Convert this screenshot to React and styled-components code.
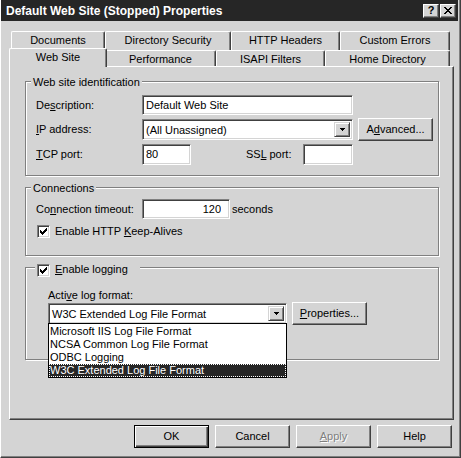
import React from 'react';
import styled, { createGlobalStyle, css } from 'styled-components';

const FACE = '#d4d4d4';
const SHADOW = '#808080';
const DARK = '#404040';
const HILITE = '#ffffff';
const CAPTION = '#262626';

const Global = createGlobalStyle`
  html, body { margin: 0; padding: 0; background: ${FACE}; }
  body {
    font-family: "Liberation Sans", Arial, sans-serif;
    font-size: 11px;
    color: #000;
  }
  * { box-sizing: border-box; }
`;

const Window = styled.div`
  width: 461px;
  height: 458px;
  background: ${FACE};
  border-left: 1px solid ${HILITE};
  border-right: 1px solid ${DARK};
  border-bottom: 1px solid ${DARK};
  box-shadow: inset -1px -1px 0 ${SHADOW};
  display: flex;
  flex-direction: column;
`;

const TitleBar = styled.div`
  height: 21px;
  margin-right: 2px;
  background: ${CAPTION};
  display: flex;
  align-items: center;
  padding: 0 2px 0 5px;
`;

const TitleText = styled.span`
  flex: 1;
  color: #fff;
  font-weight: bold;
  font-size: 12px;
  line-height: 14px;
  white-space: nowrap;
`;

const TitleButtons = styled.div`
  display: flex;
  gap: 1px;
`;

const TitleButton = styled.div`
  width: 16px;
  height: 14px;
  background: ${FACE};
  border: 1px solid;
  border-color: ${HILITE} ${DARK} ${DARK} ${HILITE};
  box-shadow: inset -1px -1px 0 ${SHADOW};
  display: flex;
  align-items: center;
  justify-content: center;
  font-weight: bold;
  font-size: 11px;
  line-height: 11px;
  color: #000;
`;

const Body = styled.div`
  display: flex;
  flex-direction: column;
  padding: 10px 0 0 8px;
`;

const TabRow = styled.div`
  display: flex;
  align-items: flex-start;
  height: ${p => p.$h}px;
  padding-left: 2px;
`;

const Tab = styled.div`
  flex: none;
  width: ${p => p.$w}px;
  height: ${p => p.$h}px;
  margin-top: ${p => p.$top || 0}px;
  background: ${FACE};
  border-top: 1px solid ${HILITE};
  border-left: 1px solid ${HILITE};
  border-right: 1px solid ${DARK};
  box-shadow: inset -1px 0 0 ${SHADOW};
  border-radius: 2px 2px 0 0;
  padding-top: 2px;
  text-align: center;
  line-height: 13px;
  white-space: nowrap;
  ${p => p.$active && css`
    position: relative;
    z-index: 1;
    margin: 0 -2px -1px;
  `}
`;

const TabPanel = styled.div`
  width: 445px;
  height: 354px;
  border: 1px solid;
  border-color: ${HILITE} ${DARK} ${DARK} ${HILITE};
  box-shadow: inset -1px -1px 0 ${SHADOW};
  padding: 14px 14px 0 15px;
  display: flex;
  flex-direction: column;
  gap: 11px;
`;

const Group = styled.div`
  position: relative;
  height: ${p => p.$h}px;
  border: 1px solid ${SHADOW};
  box-shadow: 1px 1px 0 ${HILITE}, inset 1px 1px 0 ${HILITE};
  padding: ${p => p.$pad};
  display: flex;
  flex-direction: column;
`;

const Caption = styled.div`
  position: absolute;
  top: ${p => p.$top}px;
  left: ${p => p.$left}px;
  padding: 0 ${p => p.$right || 2}px 0 2px;
  background: ${FACE};
  line-height: 13px;
  display: flex;
  align-items: flex-start;
  gap: 5px;
  white-space: nowrap;
`;

const Row = styled.div`
  display: flex;
  align-items: center;
  height: ${p => p.$h}px;
  flex: none;
`;

const Label = styled.span`
  flex: none;
  width: ${p => (p.$w ? `${p.$w}px` : 'auto')};
  margin-left: ${p => p.$ml || 0}px;
  line-height: 13px;
  white-space: nowrap;
`;

const Key = styled.span`
  text-decoration: underline;
  text-underline-offset: 1px;
`;

const sunken = css`
  border: 1px solid;
  border-color: ${SHADOW} ${HILITE} ${HILITE} ${SHADOW};
  box-shadow: inset 1px 1px 0 ${DARK}, inset -1px -1px 0 ${FACE};
`;

const TextBox = styled.input`
  ${sunken};
  flex: none;
  width: ${p => p.$w}px;
  height: ${p => p.$h || 20}px;
  background: #fff;
  font: inherit;
  color: #000;
  padding: 0 ${p => (p.$right ? 8 : 2)}px 0 3px;
  text-align: ${p => (p.$right ? 'right' : 'left')};
  outline: none;
  margin: 0;
`;

const Combo = styled.div`
  ${sunken};
  position: relative;
  flex: none;
  width: ${p => p.$w}px;
  height: 21px;
  background: #fff;
  display: flex;
  align-items: stretch;
  padding: 2px;
`;

const ComboValue = styled.span`
  flex: 1;
  padding-left: 1px;
  line-height: 17px;
  white-space: nowrap;
  overflow: hidden;
`;

const DropButton = styled.span`
  flex: none;
  width: 16px;
  background: ${FACE};
  border: 1px solid;
  border-color: ${FACE} ${DARK} ${DARK} ${FACE};
  box-shadow: inset 1px 1px 0 ${HILITE}, inset -1px -1px 0 ${SHADOW};
  display: flex;
  align-items: center;
  justify-content: center;
`;

const DropList = styled.ul`
  position: absolute;
  top: 100%;
  left: -1px;
  right: -1px;
  margin: 0;
  padding: 1px 0 0;
  list-style: none;
  background: #fff;
  border: 1px solid #000;
  z-index: 2;
`;

const Option = styled.li`
  height: 13px;
  line-height: 13px;
  padding-left: 1px;
  white-space: nowrap;
  ${p => p.$selected && css`
    background: ${CAPTION};
    color: #fff;
    outline: 1px dotted #fff;
    outline-offset: -1px;
  `}
`;

const Button = styled.div`
  flex: none;
  width: 75px;
  height: ${p => p.$h || 23}px;
  margin-left: ${p => p.$ml || 0}px;
  background: ${FACE};
  border: 1px solid;
  border-color: ${HILITE} ${DARK} ${DARK} ${HILITE};
  box-shadow: inset -1px -1px 0 ${SHADOW};
  display: flex;
  align-items: center;
  justify-content: center;
  line-height: 13px;
  white-space: nowrap;
  color: ${p => (p.$disabled ? SHADOW : '#000')};
  text-shadow: ${p => (p.$disabled ? `1px 1px 0 ${HILITE}` : 'none')};
  ${p => p.$default && css`
    border: 1px solid #000;
    box-shadow: inset 1px 1px 0 ${HILITE}, inset -1px -1px 0 ${DARK}, inset -2px -2px 0 ${SHADOW};
  `}
`;

const ButtonRow = styled.div`
  width: 445px;
  display: flex;
  justify-content: flex-end;
  gap: 6px;
  margin-top: 5px;
  padding-right: 2px;
`;

const CheckBoxBox = styled.span`
  ${sunken};
  flex: none;
  width: 13px;
  height: 13px;
  margin-top: ${p => p.$mt || 0}px;
  margin-left: ${p => p.$ml || 0}px;
  background: #fff;
  display: flex;
  align-items: center;
  justify-content: center;
`;

const CheckLine = styled.label`
  display: flex;
  align-items: center;
  gap: 5px;
  line-height: 13px;
`;

const CHECK_COLS = [2, 3, 4, 3, 2, 1, 0];
const CheckMark = () => (
  <svg width="7" height="7" viewBox="0 0 7 7" shapeRendering="crispEdges">
    {CHECK_COLS.map((y, x) => (
      <rect key={x} x={x} y={y} width="1" height="3" fill="#000" />
    ))}
  </svg>
);

const CheckBox = ({ mt, ml }) => (
  <CheckBoxBox $mt={mt} $ml={ml}>
    <CheckMark />
  </CheckBoxBox>
);

const Arrow = () => (
  <svg width="5" height="3" viewBox="0 0 5 3" shapeRendering="crispEdges">
    <rect x="0" y="0" width="5" height="1" fill="#000" />
    <rect x="1" y="1" width="3" height="1" fill="#000" />
    <rect x="2" y="2" width="1" height="1" fill="#000" />
  </svg>
);

const CloseGlyph = () => (
  <svg width="8" height="7" viewBox="0 0 8 7" shapeRendering="crispEdges">
    {[0, 1, 2, 3, 4, 5, 6].map(i => (
      <React.Fragment key={i}>
        <rect x={i} y={i} width="2" height="1" fill="#000" />
        <rect x={6 - i} y={i} width="2" height="1" fill="#000" />
      </React.Fragment>
    ))}
  </svg>
);

const backTabs = [
  { label: 'Documents', w: 94 },
  { label: 'Directory Security', w: 126 },
  { label: 'HTTP Headers', w: 109 },
  { label: 'Custom Errors', w: 110 },
];

const frontTabs = [
  { label: 'Web Site', w: 94, active: true },
  { label: 'Performance', w: 111 },
  { label: 'ISAPI Filters', w: 109 },
  { label: 'Home Directory', w: 125 },
];

const logFormats = [
  'Microsoft IIS Log File Format',
  'NCSA Common Log File Format',
  'ODBC Logging',
  'W3C Extended Log File Format',
];

export default function App() {
  return (
    <>
      <Global />
      <Window>
        <TitleBar>
          <TitleText>Default Web Site (Stopped) Properties</TitleText>
          <TitleButtons>
            <TitleButton>?</TitleButton>
            <TitleButton><CloseGlyph /></TitleButton>
          </TitleButtons>
        </TitleBar>

        <Body>
          <TabRow $h={17}>
            {backTabs.map(t => (
              <Tab key={t.label} $w={t.w} $h={19}>{t.label}</Tab>
            ))}
          </TabRow>
          <TabRow $h={18}>
            {frontTabs.map(t =>
              t.active ? (
                <Tab key={t.label} $w={t.w + 4} $h={19} $active>{t.label}</Tab>
              ) : (
                <Tab key={t.label} $w={t.w} $h={16} $top={2}>{t.label}</Tab>
              )
            )}
          </TabRow>

          <TabPanel>
            <Group $h={95} $pad="11px 0 0 10px">
              <Caption $top={-6} $left={5}>Web site identification</Caption>
              <Row $h={24}>
                <Label $w={106}>De<Key>s</Key>cription:</Label>
                <TextBox $w={211} readOnly value="Default Web Site" />
              </Row>
              <Row $h={25}>
                <Label $w={106}><Key>I</Key>P address:</Label>
                <Combo $w={211}>
                  <ComboValue>(All Unassigned)</ComboValue>
                  <DropButton><Arrow /></DropButton>
                </Combo>
                <Button $ml={5}>A<Key>d</Key>vanced...</Button>
              </Row>
              <Row $h={24}>
                <Label $w={106}><Key>T</Key>CP port:</Label>
                <TextBox $w={49} $h={21} readOnly value="80" />
                <Label $w={57} $ml={55}>SS<Key>L</Key> port:</Label>
                <TextBox $w={50} $h={21} readOnly value="" />
              </Row>
            </Group>

            <Group $h={69} $pad="10px 0 0 10px">
              <Caption $top={-6} $left={5}>Connections</Caption>
              <Row $h={22}>
                <Label $w={106}>Co<Key>n</Key>nection timeout:</Label>
                <TextBox $w={88} $right readOnly value="120" />
                <Label $ml={2}>seconds</Label>
              </Row>
              <Row $h={22}>
                <CheckLine>
                  <CheckBox ml={1} />
                  <span>Enable HTTP <Key>K</Key>eep-Alives</span>
                </CheckLine>
              </Row>
            </Group>

            <Group $h={93} $pad="21px 0 0 22px">
              <Caption $top={-5} $left={9} $right={12}>
                <CheckBox mt={1} />
                <span><Key>E</Key>nable logging</span>
              </Caption>
              <Label>Acti<Key>v</Key>e log format:</Label>
              <Row $h={23}>
                <Combo $w={239}>
                  <ComboValue>W3C Extended Log File Format</ComboValue>
                  <DropButton><Arrow /></DropButton>
                  <DropList>
                    {logFormats.map((f, i) => (
                      <Option key={f} $selected={i === logFormats.length - 1}>{f}</Option>
                    ))}
                  </DropList>
                </Combo>
                <Button $ml={5}><Key>P</Key>roperties...</Button>
              </Row>
            </Group>
          </TabPanel>

          <ButtonRow>
            <Button $default>OK</Button>
            <Button>Cancel</Button>
            <Button $disabled><Key>A</Key>pply</Button>
            <Button>Help</Button>
          </ButtonRow>
        </Body>
      </Window>
    </>
  );
}
